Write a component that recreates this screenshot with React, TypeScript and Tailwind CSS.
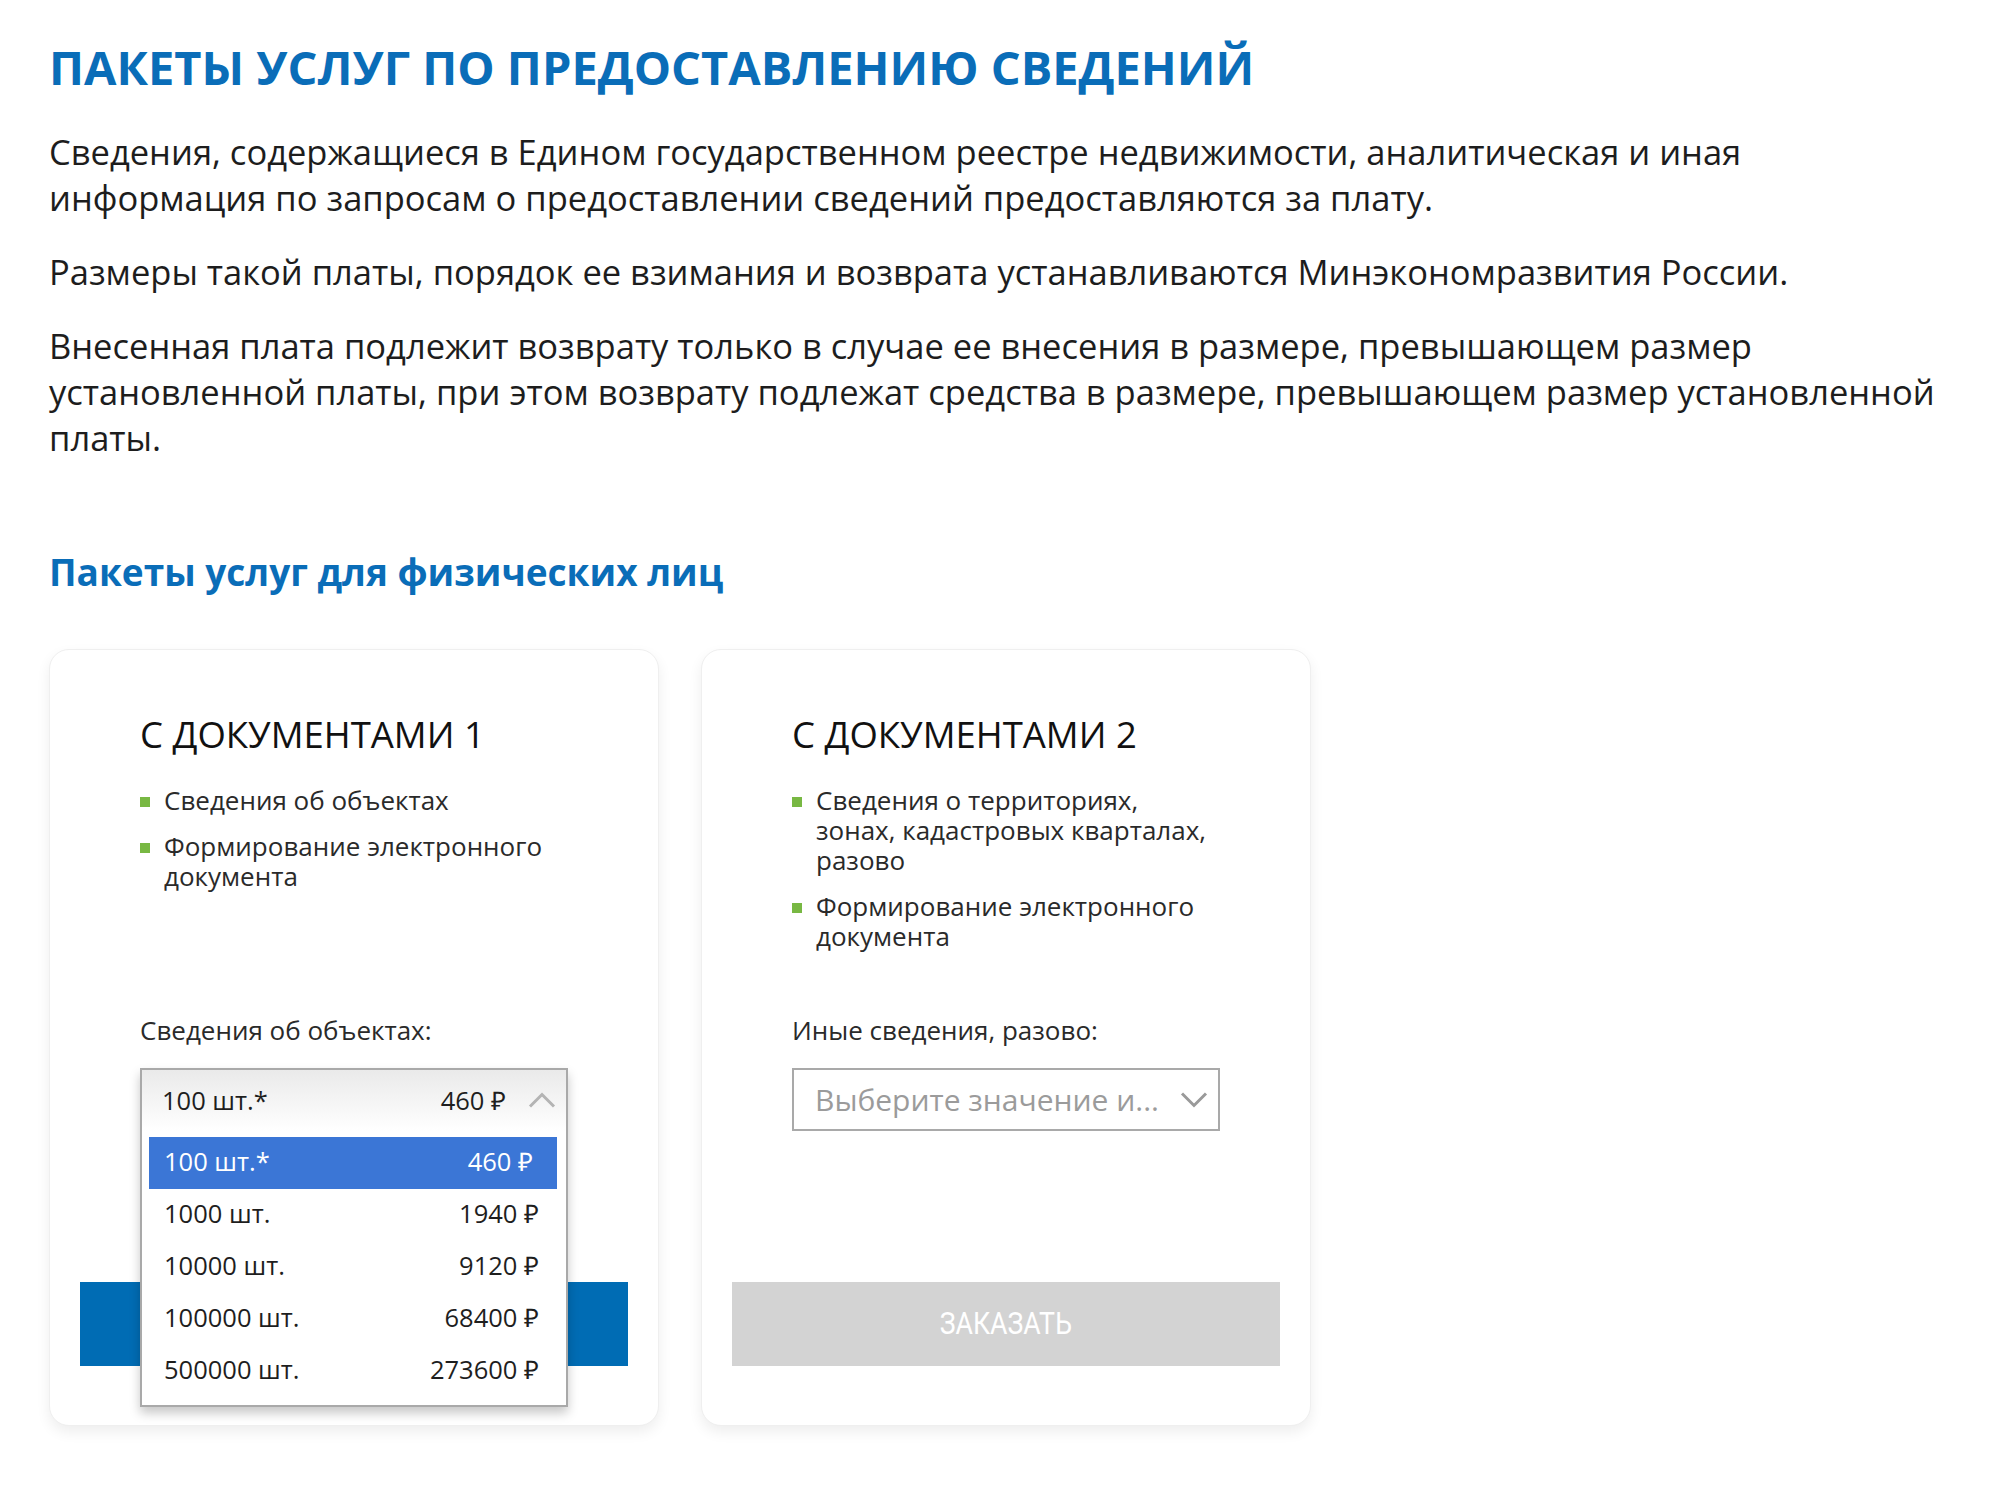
import React from "react"

interface Option {
  label: string
  price: string
}

const options: Option[] = [
  { label: "100 шт.*", price: "460 ₽" },
  { label: "1000 шт.", price: "1940 ₽" },
  { label: "10000 шт.", price: "9120 ₽" },
  { label: "100000 шт.", price: "68400 ₽" },
  { label: "500000 шт.", price: "273600 ₽" },
]

function ChevronUp() {
  return (
    <svg width="28" height="16" viewBox="0 0 28 16" fill="none">
      <polyline points="2,14.5 14,2.5 26,14.5" stroke="#b4b4b4" strokeWidth="3" />
    </svg>
  )
}

function ChevronDown() {
  return (
    <svg width="28" height="16" viewBox="0 0 28 16" fill="none">
      <polyline points="2,1.5 14,13.5 26,1.5" stroke="#9a9a9a" strokeWidth="3" />
    </svg>
  )
}

function Bullets({ items }: { items: string[] }) {
  return (
    <ul className="mt-[30px] flex h-[230px] flex-col gap-[16px]">
      {items.map((item) => (
        <li key={item} className="flex text-[26px] leading-[30px] text-[#2a2a2a]">
          <span className="mt-[12px] mr-[14px] h-[10px] w-[10px] shrink-0 bg-[#78b843]" />
          <span>{item}</span>
        </li>
      ))}
    </ul>
  )
}

function OpenSelect() {
  return (
    <div className="relative h-[63px] w-[428px]">
      <div className="absolute left-0 top-0 z-10 w-[428px] border-2 border-[#a9a9a9] bg-white shadow-[0_6px_10px_rgba(0,0,0,0.22)]">
        <div className="flex h-[61px] items-center bg-gradient-to-b from-[#eaeaea] to-white pl-[20px] pr-[10px] pb-[1px] text-[25.5px] text-[#1e1e1e]">
          <span>100 шт.*</span>
          <span className="ml-auto">460 ₽</span>
          <span className="ml-[22px] flex items-center">
            <ChevronUp />
          </span>
        </div>
        <div className="ml-[7px] mr-[9px] pt-[6px] pb-[8px]">
          {options.map((o, i) => (
            <div
              key={o.label}
              className={
                i === 0
                  ? "flex h-[52px] items-center justify-between bg-[#3b76d6] pl-[15px] pr-[24px] pb-[3px] text-[25.5px] text-white"
                  : "flex h-[52px] items-center justify-between pl-[15px] pr-[18px] pb-[3px] text-[25.5px] text-[#1e1e1e]"
              }
            >
              <span>{o.label}</span>
              <span>{o.price}</span>
            </div>
          ))}
        </div>
      </div>
    </div>
  )
}

function ClosedSelect() {
  return (
    <div className="flex h-[63px] w-[428px] items-center border-2 border-[#a9a9a9] bg-white pl-[21px] pr-[10px]">
      <span className="text-[30px] text-[#9b9b9b]">Выберите значение и...</span>
      <span className="ml-auto flex items-center">
        <ChevronDown />
      </span>
    </div>
  )
}

function Card({
  title,
  items,
  label,
  open,
}: {
  title: string
  items: string[]
  label: string
  open: boolean
}) {
  return (
    <div className="flex h-[777px] w-[610px] flex-col rounded-[20px] border border-[#efefef] bg-white shadow-[0_6px_14px_rgba(0,0,0,0.07)]">
      <div className="pl-[90px] pr-[89px] pt-[63px]">
        <h3 className="text-[36.5px] leading-[42px] text-[#111]">{title}</h3>
        <Bullets items={items} />
        <div className="text-[26px] leading-[30px] text-[#2a2a2a]">{label}</div>
        <div className="mt-[23px]">{open ? <OpenSelect /> : <ClosedSelect />}</div>
      </div>
      <button
        className={
          open
            ? "mx-[30px] mt-auto mb-[59px] h-[84px] bg-[#006cb4] font-['Roboto',sans-serif] text-[31px] text-white"
            : "mx-[30px] mt-auto mb-[59px] h-[84px] bg-[#d3d3d3] font-['Roboto',sans-serif] text-[31px] text-white"
        }
      >
        <span className="inline-block scale-x-[0.86]">ЗАКАЗАТЬ</span>
      </button>
    </div>
  )
}

export default function App() {
  return (
    <div className="min-h-screen bg-white px-[49px] pt-[39px] pb-[80px] font-['Open_Sans',sans-serif]">
      <h1 className="text-[47px] font-bold leading-[56px] text-[#0a6db8]">
        ПАКЕТЫ УСЛУГ ПО ПРЕДОСТАВЛЕНИЮ СВЕДЕНИЙ
      </h1>
      <div className="mt-[34px] flex flex-col gap-[28px] text-[34.5px] leading-[46px] text-[#1d1d1d]">
        <p>
          Сведения, содержащиеся в Едином государственном реестре недвижимости, аналитическая и иная
          информация по запросам о предоставлении сведений предоставляются за плату.
        </p>
        <p>
          Размеры такой платы, порядок ее взимания и возврата устанавливаются Минэкономразвития России.
        </p>
        <p>
          Внесенная плата подлежит возврату только в случае ее внесения в размере, превышающем размер
          установленной платы, при этом возврату подлежат средства в размере, превышающем размер
          установленной платы.
        </p>
      </div>
      <h2 className="mt-[89px] text-[37px] font-bold leading-[44px] text-[#0a6db8]">
        Пакеты услуг для физических лиц
      </h2>
      <div className="mt-[55px] flex gap-[42px]">
        <Card
          title="С ДОКУМЕНТАМИ 1"
          items={["Сведения об объектах", "Формирование электронного документа"]}
          label="Сведения об объектах:"
          open
        />
        <Card
          title="С ДОКУМЕНТАМИ 2"
          items={[
            "Сведения о территориях, зонах, кадастровых кварталах, разово",
            "Формирование электронного документа",
          ]}
          label="Иные сведения, разово:"
          open={false}
        />
      </div>
    </div>
  )
}
